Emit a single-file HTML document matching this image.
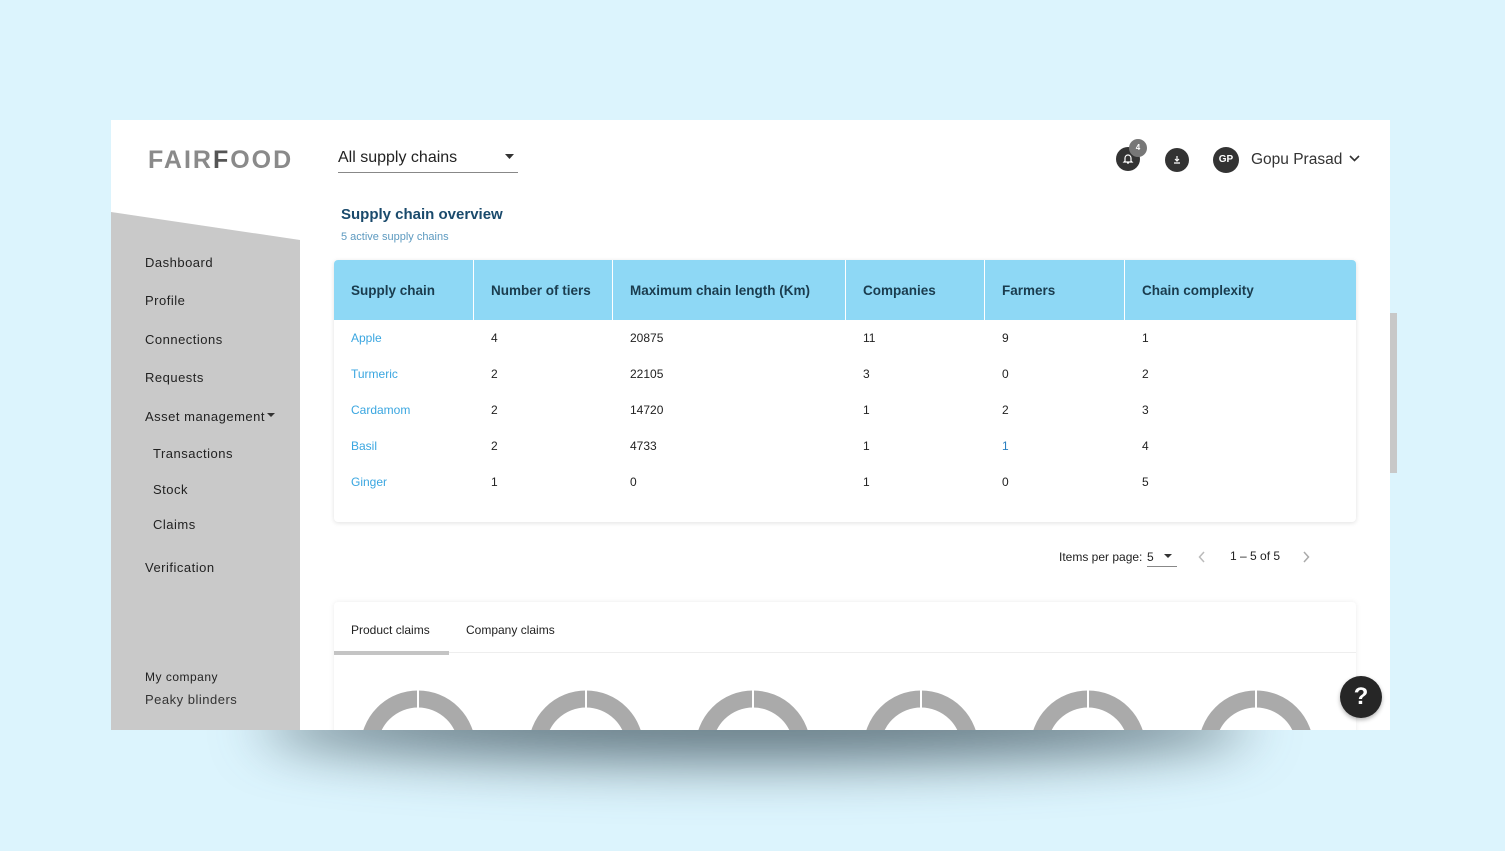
<!DOCTYPE html>
<html><head><style>
*{margin:0;padding:0;box-sizing:border-box}
body{width:1505px;height:851px;background:#dcf4fd;font-family:"Liberation Sans",sans-serif;position:relative;overflow:hidden}
.a{position:absolute;white-space:nowrap}
#frame{position:absolute;left:111px;top:120px;width:1279px;height:610px;background:#fff;overflow:hidden}
#shadow{position:absolute;left:260px;top:690px;width:990px;height:70px;background:rgba(50,70,80,.75);filter:blur(28px);border-radius:50%}
.nav{font-size:13px;color:#222;letter-spacing:.5px}
.hd{font-size:13.5px;font-weight:bold;color:#1a3c4e}
.c{font-size:12px;color:#222}
.l{color:#3aa6e0}
</style></head><body>
<div id="shadow"></div>
<div id="frame">
<svg class="a" style="left:0;top:0" width="190" height="610"><polygon points="0,92 189,120 189,610 0,610" fill="#c9c9c9"/></svg>
<div class="a" style="left:37px;top:26px;font-size:25px;font-weight:bold;color:#8a8a8a;letter-spacing:2px">FAIR<span style="color:#555">F</span>OOD</div>
<div class="a" style="left:227px;top:29px;font-size:16px;color:#222">All supply chains</div>
<svg class="a" style="left:394px;top:34px" width="10" height="6"><polygon points="0,0 9,0 4.5,5" fill="#333"/></svg>
<div class="a" style="left:227px;top:52px;width:180px;height:1px;background:#888"></div>
<div class="a" style="left:230px;top:86px;font-size:15px;font-weight:bold;color:#1a4a6c">Supply chain overview</div>
<div class="a" style="left:230px;top:111px;font-size:11px;color:#5d9ac0">5 active supply chains</div>
<div class="a" style="left:1005px;top:27px;width:24px;height:24px;border-radius:50%;background:#333"></div>
<svg class="a" style="left:1011px;top:33px" width="12" height="12"><path d="M3 8V5a3 3 0 016 0v3l1 1H2zM5 10h2" stroke="#fff" fill="none" stroke-width="1.2"/></svg>
<div class="a" style="left:1018px;top:19px;width:18px;height:18px;border-radius:50%;background:#777;color:#fff;font-size:8px;font-weight:bold;text-align:center;line-height:18px">4</div>
<div class="a" style="left:1054px;top:28px;width:24px;height:24px;border-radius:50%;background:#333"></div>
<svg class="a" style="left:1060px;top:34px" width="12" height="12"><path d="M6 2v5M4 5l2 2 2-2M3 9h6" stroke="#fff" fill="none" stroke-width="1.2"/></svg>
<div class="a" style="left:1102px;top:27px;width:26px;height:26px;border-radius:50%;background:#333;color:#fff;font-size:10px;font-weight:bold;text-align:center;line-height:26px">GP</div>
<div class="a" style="left:1140px;top:31px;font-size:15.5px;color:#333">Gopu Prasad</div>
<svg class="a" style="left:1238px;top:35px" width="11" height="8"><path d="M1 1l4.5 4.5L10 1" stroke="#333" fill="none" stroke-width="1.6"/></svg>
<div class="a nav" style="left:34px;top:135px">Dashboard</div>
<div class="a nav" style="left:34px;top:173px">Profile</div>
<div class="a nav" style="left:34px;top:212px">Connections</div>
<div class="a nav" style="left:34px;top:250px">Requests</div>
<div class="a nav" style="left:34px;top:289px">Asset management</div>
<svg class="a" style="left:156px;top:293px" width="9" height="6"><polygon points="0,0 8,0 4,4" fill="#333"/></svg>
<div class="a nav" style="left:42px;top:326px">Transactions</div>
<div class="a nav" style="left:42px;top:362px">Stock</div>
<div class="a nav" style="left:42px;top:397px">Claims</div>
<div class="a nav" style="left:34px;top:440px">Verification</div>
<div class="a nav" style="left:34px;top:550px;font-size:12px">My company</div>
<div class="a nav" style="left:34px;top:572px;color:#333">Peaky blinders</div>
<div class="a" style="left:223px;top:140px;width:1022px;height:262px;background:#fff;border-radius:4px;box-shadow:0 1px 5px rgba(0,0,0,.12);overflow:hidden">
<div style="height:60px;background:#8ed8f5;position:relative">
<div class="a hd" style="left:17px;top:23px">Supply chain</div>
<div class="a hd" style="left:157px;top:23px">Number of tiers</div>
<div class="a hd" style="left:296px;top:23px">Maximum chain length (Km)</div>
<div class="a hd" style="left:529px;top:23px">Companies</div>
<div class="a hd" style="left:668px;top:23px">Farmers</div>
<div class="a hd" style="left:808px;top:23px">Chain complexity</div>
<div class="a" style="left:139px;top:0;width:1px;height:60px;background:#fff"></div>
<div class="a" style="left:278px;top:0;width:1px;height:60px;background:#fff"></div>
<div class="a" style="left:511px;top:0;width:1px;height:60px;background:#fff"></div>
<div class="a" style="left:650px;top:0;width:1px;height:60px;background:#fff"></div>
<div class="a" style="left:790px;top:0;width:1px;height:60px;background:#fff"></div>
</div>
</div>
<div class="a c l" style="left:240px;top:211px">Apple</div><div class="a c" style="left:380px;top:211px">4</div><div class="a c" style="left:519px;top:211px">20875</div><div class="a c" style="left:752px;top:211px">11</div><div class="a c" style="left:891px;top:211px">9</div><div class="a c" style="left:1031px;top:211px">1</div>
<div class="a c l" style="left:240px;top:247px">Turmeric</div><div class="a c" style="left:380px;top:247px">2</div><div class="a c" style="left:519px;top:247px">22105</div><div class="a c" style="left:752px;top:247px">3</div><div class="a c" style="left:891px;top:247px">0</div><div class="a c" style="left:1031px;top:247px">2</div>
<div class="a c l" style="left:240px;top:283px">Cardamom</div><div class="a c" style="left:380px;top:283px">2</div><div class="a c" style="left:519px;top:283px">14720</div><div class="a c" style="left:752px;top:283px">1</div><div class="a c" style="left:891px;top:283px">2</div><div class="a c" style="left:1031px;top:283px">3</div>
<div class="a c l" style="left:240px;top:319px">Basil</div><div class="a c" style="left:380px;top:319px">2</div><div class="a c" style="left:519px;top:319px">4733</div><div class="a c" style="left:752px;top:319px">1</div><div class="a c l" style="left:891px;top:319px;color:#2a7fc0">1</div><div class="a c" style="left:1031px;top:319px">4</div>
<div class="a c l" style="left:240px;top:355px">Ginger</div><div class="a c" style="left:380px;top:355px">1</div><div class="a c" style="left:519px;top:355px">0</div><div class="a c" style="left:752px;top:355px">1</div><div class="a c" style="left:891px;top:355px">0</div><div class="a c" style="left:1031px;top:355px">5</div>
<div class="a c" style="left:948px;top:430px">Items per page:</div>
<div class="a c" style="left:1036px;top:430px">5</div>
<svg class="a" style="left:1053px;top:434px" width="9" height="5"><polygon points="0,0 8,0 4,4" fill="#333"/></svg>
<div class="a" style="left:1036px;top:446px;width:30px;height:1px;background:#888"></div>
<svg class="a" style="left:1087px;top:431px" width="8" height="12"><path d="M6 1L1.5 6 6 11" stroke="#bbb" fill="none" stroke-width="1.5"/></svg>
<div class="a c" style="left:1119px;top:429px">1 – 5 of 5</div>
<svg class="a" style="left:1191px;top:431px" width="8" height="12"><path d="M2 1l4.5 5L2 11" stroke="#aaa" fill="none" stroke-width="1.5"/></svg>
<div class="a" style="left:223px;top:482px;width:1022px;height:140px;background:#fff;border-radius:4px;box-shadow:0 0 6px rgba(0,0,0,.08)">
<div class="a" style="left:0;top:50px;width:1022px;height:1px;background:#eee"></div>
<div class="a" style="left:0;top:49px;width:115px;height:4px;background:#c4c4c4"></div>
<div class="a" style="left:17px;top:21px;font-size:12px;color:#222">Product claims</div>
<div class="a" style="left:132px;top:21px;font-size:12px;color:#222">Company claims</div>
</div>
<svg class="a" style="left:0;top:0" width="1279" height="610">
<g fill="none" stroke="#aaa" stroke-width="17">
<circle cx="307" cy="628" r="49"/><circle cx="475" cy="628" r="49"/><circle cx="642" cy="628" r="49"/><circle cx="810" cy="628" r="49"/><circle cx="977" cy="628" r="49"/><circle cx="1145" cy="628" r="49"/>
</g>
<g stroke="#fff" stroke-width="2"><path d="M307 568v20M475 568v20M642 568v20M810 568v20M977 568v20M1145 568v20"/></g>
</svg>
<div class="a" style="left:1229px;top:556px;width:42px;height:42px;border-radius:50%;background:#262626;color:#fff;font-size:24px;font-weight:bold;text-align:center;line-height:42px;box-shadow:0 2px 4px rgba(0,0,0,.3)">?</div>
</div>
<div class="a" style="left:1390px;top:313px;width:7px;height:160px;background:#c8c8c8"></div>
</body></html>
